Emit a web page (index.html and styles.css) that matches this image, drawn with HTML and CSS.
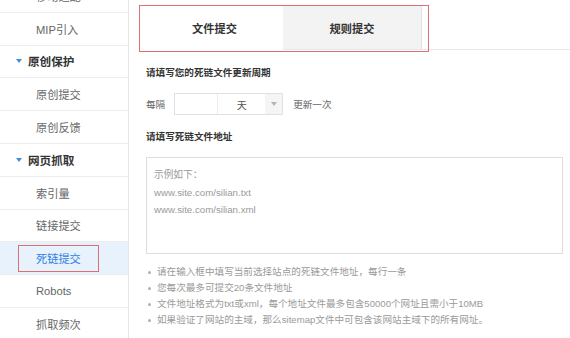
FILE: index.html
```html
<!DOCTYPE html>
<html lang="zh-CN">
<head>
<meta charset="utf-8">
<title>死链提交</title>
<link rel="stylesheet" href="styles.css">
</head>
<body>
<div class="page">
  <aside class="sidebar">
    <ul class="nav">
      <li class="nav-item first">移动适配</li>
      <li class="nav-item">MIP引入</li>
      <li class="nav-item group"><svg class="caret" width="6" height="4" viewBox="0 0 6 4"><path d="M0 0h6L3 4z" fill="#3f8fdc"/></svg>原创保护</li>
      <li class="nav-item">原创提交</li>
      <li class="nav-item">原创反馈</li>
      <li class="nav-item group"><svg class="caret" width="6" height="4" viewBox="0 0 6 4"><path d="M0 0h6L3 4z" fill="#3f8fdc"/></svg>网页抓取</li>
      <li class="nav-item">索引量</li>
      <li class="nav-item">链接提交</li>
      <li class="nav-item active"><span class="mark">死链提交</span></li>
      <li class="nav-item">Robots</li>
      <li class="nav-item">抓取频次</li>
    </ul>
  </aside>
  <main class="main">
    <div class="tabs">
      <div class="tab tab-active">文件提交</div>
      <div class="tab">规则提交</div>
      <div class="tabs-mark"></div>
    </div>
    <div class="section-title first-title">请填写您的死链文件更新周期</div>
    <div class="period">
      <span class="label">每隔</span>
      <div class="combo">
        <span class="num"></span>
        <span class="unit">天</span>
        <span class="arrow"><svg width="6" height="4" viewBox="0 0 6 4"><path d="M0 0h6L3 4z" fill="#b5b5b5"/></svg></span>
      </div>
      <span class="label">更新一次</span>
    </div>
    <div class="section-title second-title">请填写死链文件地址</div>
    <div class="textarea">
      <div>示例如下：</div>
      <div>www.site.com/silian.txt</div>
      <div>www.site.com/silian.xml</div>
    </div>
    <ul class="tips">
      <li>请在输入框中填写当前选择站点的死链文件地址，每行一条</li>
      <li>您每次最多可提交20条文件地址</li>
      <li>文件地址格式为txt或xml，每个地址文件最多包含50000个网址且需小于10MB</li>
      <li>如果验证了网站的主域，那么sitemap文件中可包含该网站主域下的所有网址。</li>
    </ul>
  </main>
</div>
</body>
</html>
```
FILE: styles.css
```css
html, body {
  margin: 0;
  padding: 0;
  background: #fff;
}
body {
  font-family: "Liberation Sans", "Noto Sans CJK SC", sans-serif;
  width: 570px;
  height: 338px;
  overflow: hidden;
}
.page {
  display: flex;
  height: 338px;
}
.sidebar {
  width: 128px;
  flex: none;
  border-right: 1px solid #e6e6e6;
  overflow: hidden;
}
.nav {
  list-style: none;
  margin: 0;
  padding: 0;
}
.nav-item {
  height: 31.8px;
  border-bottom: 1px solid #ededed;
  display: flex;
  align-items: center;
  padding-left: 36px;
  font-size: 11.2px;
  color: #666;
  position: relative;
}
.nav-item.first {
  margin-top: -20px;
}
.nav-item.group {
  padding-left: 16px;
  font-weight: 700;
  color: #333;
  font-size: 11.6px;
}
.caret {
  margin-right: 6px;
}
.nav-item.active {
  background: #e8f2fd;
  color: #2f80e3;
  padding-left: 18px;
}
.mark {
  display: flex;
  align-items: center;
  width: 81px;
  height: 27px;
  border: 1px solid #dc6f73;
  box-sizing: border-box;
  padding-left: 17px;
}
.main {
  flex: 1;
  padding: 6px 0 0 17px;
  min-width: 0;
}
.tabs {
  display: flex;
  height: 43px;
  border-bottom: 1px solid #e8e8e8;
  position: relative;
}
.tab {
  width: 137px;
  height: 43px;
  display: flex;
  align-items: center;
  justify-content: center;
  font-size: 11.2px;
  font-weight: 700;
  color: #333;
  background: #f3f3f3;
  border-right: 1px solid #e2e2e2;
  box-sizing: border-box;
  width: 139px;
}
.tab-active {
  background: #fff;
  height: 44px;
  border-right: none;
  width: 137px;
}
.tabs-mark {
  position: absolute;
  left: -7px;
  top: -1px;
  width: 290px;
  height: 47px;
  border: 1px solid #dc6f73;
  box-sizing: border-box;
  pointer-events: none;
}
.section-title {
  font-size: 9.6px;
  font-weight: 700;
  color: #333;
  line-height: 14px;
}
.first-title {
  margin-top: 16px;
}
.period {
  display: flex;
  align-items: center;
  margin-top: 13px;
  height: 22px;
}
.label {
  font-size: 9.6px;
  color: #666;
}
.combo {
  display: flex;
  height: 22px;
  margin: 0 10px 0 9px;
  border: 1px solid #e0e0e0;
  box-sizing: border-box;
}
.num {
  width: 42px;
  border-right: 1px solid #ececec;
}
.unit {
  width: 47px;
  display: flex;
  align-items: center;
  justify-content: center;
  font-size: 10px;
  color: #555;
}
.arrow {
  width: 17px;
  background: #f5f5f5;
  display: flex;
  align-items: center;
  justify-content: center;
}
.second-title {
  margin-top: 15px;
}
.textarea {
  margin-top: 13px;
  width: 417px;
  height: 97px;
  border: 1px solid #dedede;
  box-sizing: border-box;
  padding: 8px 7px;
  font-size: 9.7px;
  line-height: 17.5px;
  color: #9a9a9a;
}
.tips {
  list-style: none;
  margin: 10px 0 0;
  padding: 0;
}
.tips li {
  position: relative;
  padding-left: 11px;
  font-size: 9.6px;
  line-height: 16px;
  color: #9a9a9a;
  white-space: nowrap;
}
.tips li::before {
  content: "";
  position: absolute;
  left: 2px;
  top: 7px;
  width: 3px;
  height: 3px;
  border-radius: 50%;
  background: #b0b0b0;
}
```
